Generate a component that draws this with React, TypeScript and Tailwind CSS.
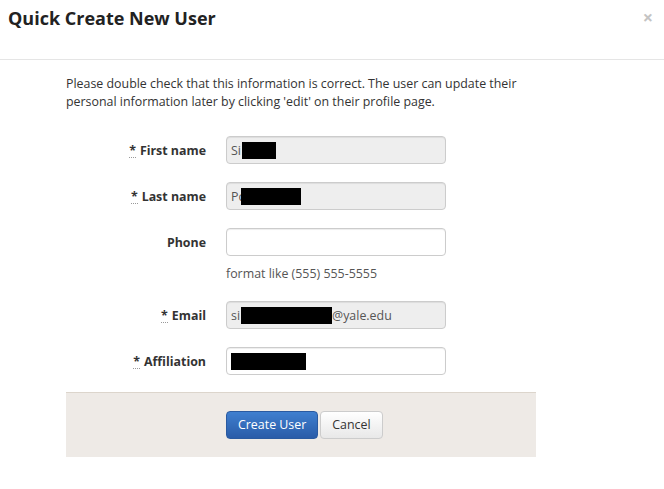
import React from 'react';

const Req = () => (
  <abbr title="required" className="no-underline border-b border-dotted border-[#999] leading-[12px] mr-1 cursor-help">*</abbr>
);

function Row({ label, req, children, help }: { label: string; req?: boolean; children: React.ReactNode; help?: string }) {
  return (
    <div className="flex">
      <div className="w-[140px] h-[28px] pt-[2px] flex items-center justify-end font-bold text-[#333]">
        {req && <Req />}
        {label}
      </div>
      <div className="ml-[20px]">
        {children}
        {help && <div className="mt-[9px] text-[#555]">{help}</div>}
      </div>
    </div>
  );
}

function Field({ disabled, children }: { disabled?: boolean; children?: React.ReactNode }) {
  return (
    <div
      className={`w-[220px] h-[28px] rounded-[4px] border border-[#ccc] px-[4px] pt-[1px] flex items-center text-[#555] shadow-[inset_0_1px_1px_rgba(0,0,0,0.075)] ${
        disabled ? 'bg-[#eeeeee]' : 'bg-white'
      }`}
    >
      {children}
    </div>
  );
}

const Black = ({ w, ml = 0 }: { w: number; ml?: number }) => (
  <span className="inline-block h-[17px] bg-black" style={{ width: w, marginLeft: ml }} />
);

export default function App() {
  return (
    <div className="w-[664px] h-[489px] bg-white text-[12.4px] leading-[18px] text-[#333]" style={{ fontFamily: '"Open Sans", sans-serif' }}>
      {/* header */}
      <div className="h-[60px] border-b border-[#e5e5e5] flex justify-between px-[8px] pt-[6px]">
        <h3 className="text-[18px] leading-[24px] font-bold text-[#222]">Quick Create New User</h3>
        <span className="text-[#c4c4c4] font-bold text-[18px] leading-[20px] mr-[3px] mt-[1px]">×</span>
      </div>

      {/* body */}
      <div className="ml-[66px] w-[470px]">
        <p className="mt-[15px] mb-[25px]">
          Please double check that this information is correct. The user can update their personal information later by clicking 'edit' on their profile page.
        </p>

        <div className="flex flex-col gap-[18px]">
          <Row label="First name" req>
            <Field disabled>
              Si<Black w={34} ml={1} />
            </Field>
          </Row>
          <Row label="Last name" req>
            <Field disabled>
              Pc<Black w={60} ml={-3} />
            </Field>
          </Row>
          <Row label="Phone" help="format like (555) 555-5555">
            <Field />
          </Row>
          <Row label="Email" req>
            <Field disabled>
              si<Black w={91} ml={1} />@yale.edu
            </Field>
          </Row>
          <Row label="Affiliation" req>
            <Field>
              <Black w={75} />
            </Field>
          </Row>
        </div>

        {/* footer */}
        <div className="mt-[17px] h-[65px] bg-[#eeeae6] border-t border-[#dcd5cc] flex pt-[18px] pl-[160px] gap-[2px]">
          <button className="h-[28px] px-[11px] rounded-[4px] border border-[#2a5aa0] text-white bg-gradient-to-b from-[#3f7fcf] to-[#2a5ca8]">
            Create User
          </button>
          <button className="h-[28px] px-[11px] rounded-[4px] border border-[#ccc] text-[#333] bg-gradient-to-b from-white to-[#e8e8e8]">
            Cancel
          </button>
        </div>
      </div>
    </div>
  );
}
